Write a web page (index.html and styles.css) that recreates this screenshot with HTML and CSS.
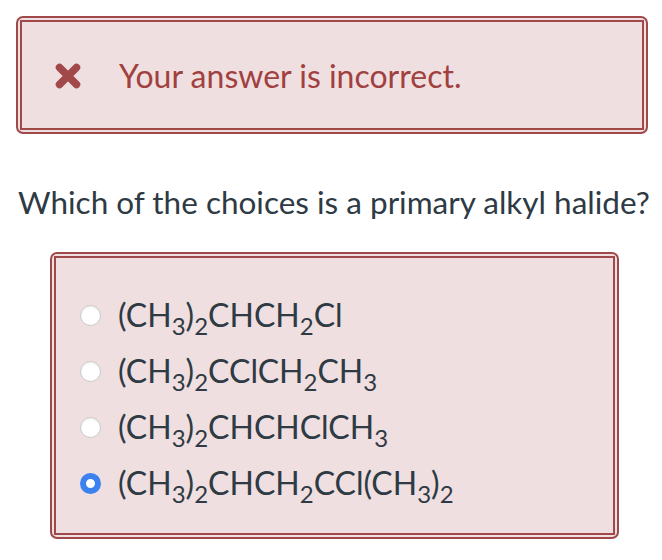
FILE: index.html
```html
<!DOCTYPE html>
<html>
<head>
<meta charset="utf-8">
<link rel="stylesheet" href="styles.css">
</head>
<body>
<div class="page">
  <div class="frame feedback">
    <div class="frame-inner feedback-inner">
      <svg class="x-icon" width="28" height="28" viewBox="0 0 28 28" aria-hidden="true">
        <path d="M5.5 5.5 L22.5 22.5 M22.5 5.5 L5.5 22.5" stroke="#a0484a" stroke-width="7.5" stroke-linecap="round"/>
      </svg>
      <span class="feedback-text">Your answer is incorrect.</span>
    </div>
  </div>

  <p class="question">Which of the choices is a primary alkyl halide?</p>

  <div class="frame choices">
    <div class="frame-inner choices-inner">
      <label class="choice"><span class="radio"></span><span class="formula">(CH<sub>3</sub>)<sub>2</sub>CHCH<sub>2</sub>Cl</span></label>
      <label class="choice"><span class="radio"></span><span class="formula">(CH<sub>3</sub>)<sub>2</sub>CClCH<sub>2</sub>CH<sub>3</sub></span></label>
      <label class="choice"><span class="radio"></span><span class="formula">(CH<sub>3</sub>)<sub>2</sub>CHCHClCH<sub>3</sub></span></label>
      <label class="choice"><span class="radio checked"></span><span class="formula">(CH<sub>3</sub>)<sub>2</sub>CHCH<sub>2</sub>CCl(CH<sub>3</sub>)<sub>2</sub></span></label>
    </div>
  </div>
</div>
</body>
</html>
```

FILE: styles.css
```css
html, body {
  margin: 0;
  padding: 0;
  background: #ffffff;
}

.page {
  font-family: Lato, "Open Sans", sans-serif;
  padding: 16px 0 0 0;
  width: 662px;
  height: 560px;
  box-sizing: border-box;
}

.frame {
  border: 2px solid #a0494a;
  border-radius: 7px;
  padding: 2px;
  background: #f0dfe0;
  box-sizing: border-box;
}

.frame-inner {
  border: 2px solid #a0494a;
  background: #f0dfe0;
  box-sizing: border-box;
}

.feedback {
  margin-left: 16px;
  width: 632px;
  height: 118px;
}

.feedback-inner {
  height: 100%;
  display: flex;
  align-items: center;
  padding-left: 32px;
  padding-top: 2px;
}

.x-icon {
  flex: none;
  display: block;
}

.feedback-text {
  margin-left: 37px;
  font-size: 32px;
  color: #a0413f;
  line-height: 1;
}

.question {
  margin: 49px 0 0 18px;
  font-size: 31.5px;
  color: #2e3a44;
  line-height: 38px;
}

.choices {
  margin: 31px 0 0 50px;
  width: 569px;
  height: 287px;
}

.choices-inner {
  height: 100%;
  display: flex;
  flex-direction: column;
  padding: 39px 0 0 24px;
  gap: 20px;
}

.choice {
  display: flex;
  align-items: center;
  height: 36px;
}

.radio {
  flex: none;
  width: 21px;
  height: 21px;
  border-radius: 50%;
  background: #ffffff;
  border: 1px solid #c9c9c9;
  box-sizing: border-box;
  box-shadow: inset 0 1px 2px rgba(0, 0, 0, 0.08);
}

.radio.checked {
  border: 6px solid #3b82f0;
  background: #ffffff;
  box-shadow: none;
}

.formula {
  margin-left: 17px;
  font-size: 32px;
  color: #2e3a44;
  line-height: 1;
}

.formula sub {
  font-size: 24px;
  vertical-align: -8px;
  line-height: 0;
}
```
